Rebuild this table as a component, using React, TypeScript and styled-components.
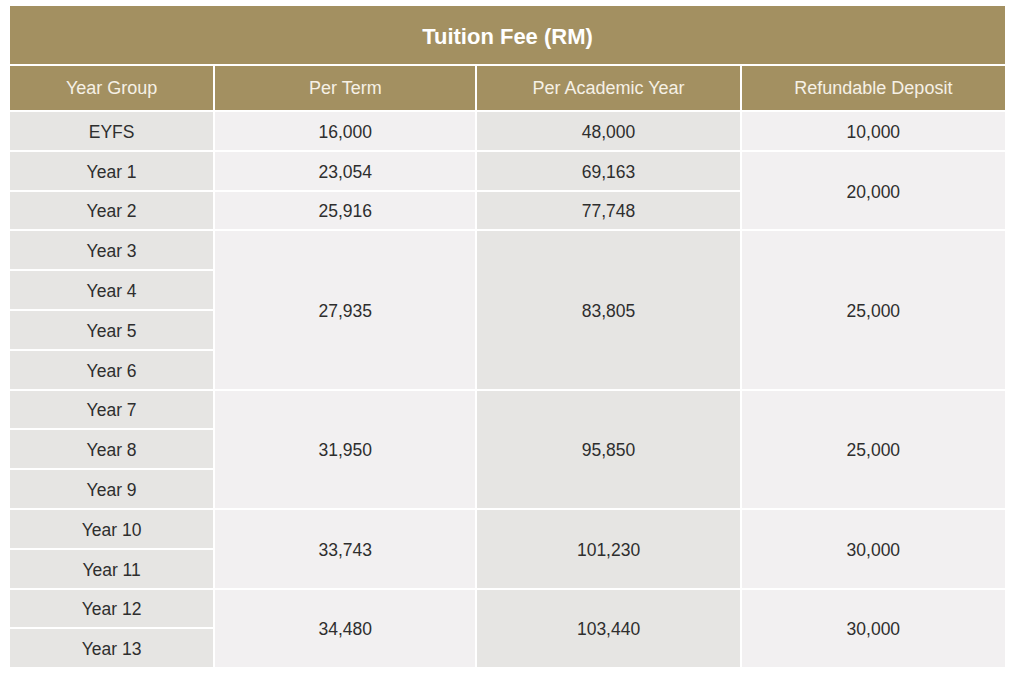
import styled, { createGlobalStyle } from "styled-components";

const GlobalStyle = createGlobalStyle`
  body {
    margin: 4px 8px;
    background: #ffffff;
    font-family: "Liberation Sans", Arial, sans-serif;
  }
`;

type Cell = { value: string; span: number };

type Group = {
  years: string[];
  perTerm?: Cell[];
  perYear?: Cell[];
  deposit: Cell[];
};

// each group lists its year rows; fee cells carry their own row span
const groups: Group[] = [
  {
    years: ["EYFS"],
    perTerm: [{ value: "16,000", span: 1 }],
    perYear: [{ value: "48,000", span: 1 }],
    deposit: [{ value: "10,000", span: 1 }]
  },
  {
    years: ["Year 1", "Year 2"],
    perTerm: [
      { value: "23,054", span: 1 },
      { value: "25,916", span: 1 }
    ],
    perYear: [
      { value: "69,163", span: 1 },
      { value: "77,748", span: 1 }
    ],
    deposit: [{ value: "20,000", span: 2 }]
  },
  {
    years: ["Year 3", "Year 4", "Year 5", "Year 6"],
    perTerm: [{ value: "27,935", span: 4 }],
    perYear: [{ value: "83,805", span: 4 }],
    deposit: [{ value: "25,000", span: 4 }]
  },
  {
    years: ["Year 7", "Year 8", "Year 9"],
    perTerm: [{ value: "31,950", span: 3 }],
    perYear: [{ value: "95,850", span: 3 }],
    deposit: [{ value: "25,000", span: 3 }]
  },
  {
    years: ["Year 10", "Year 11"],
    perTerm: [{ value: "33,743", span: 2 }],
    perYear: [{ value: "101,230", span: 2 }],
    deposit: [{ value: "30,000", span: 2 }]
  },
  {
    years: ["Year 12", "Year 13"],
    perTerm: [{ value: "34,480", span: 2 }],
    perYear: [{ value: "103,440", span: 2 }],
    deposit: [{ value: "30,000", span: 2 }]
  }
];

// a cell starts on row i when the spans before it add up to i
const cellAt = (cells: Cell[] | undefined, row: number) => {
  if (!cells) return null;
  let start = 0;
  for (const cell of cells) {
    if (start === row) return cell;
    start += cell.span;
  }
  return null;
};

const App: React.FC = () => {
  return (
    <>
      <GlobalStyle />
      <FeeTable>
        <colgroup>
          <col style={{ width: 203 }} />
          <col style={{ width: 260 }} />
          <col style={{ width: 262 }} />
          <col style={{ width: 263 }} />
        </colgroup>
        <thead>
          <tr>
            <TitleCell colSpan={4}>Tuition Fee (RM)</TitleCell>
          </tr>
          <tr>
            <HeadCell>Year Group</HeadCell>
            <HeadCell>Per Term</HeadCell>
            <HeadCell>Per Academic Year</HeadCell>
            <HeadCell>Refundable Deposit</HeadCell>
          </tr>
        </thead>
        <tbody>
          {groups.map((group) =>
            group.years.map((year, i) => {
              const term = cellAt(group.perTerm, i);
              const academic = cellAt(group.perYear, i);
              const deposit = cellAt(group.deposit, i);
              return (
                <Row key={year}>
                  <DataCell $shade="dark">{year}</DataCell>
                  {term && (
                    <DataCell $shade="light" rowSpan={term.span}>
                      {term.value}
                    </DataCell>
                  )}
                  {academic && (
                    <DataCell $shade="dark" rowSpan={academic.span}>
                      {academic.value}
                    </DataCell>
                  )}
                  {deposit && (
                    <DataCell $shade="light" rowSpan={deposit.span}>
                      {deposit.value}
                    </DataCell>
                  )}
                </Row>
              );
            })
          )}
        </tbody>
      </FeeTable>
    </>
  );
};

const FeeTable = styled.table`
  width: 999px;
  table-layout: fixed;
  border-collapse: separate;
  border-spacing: 2px;
  background: #ffffff;
`;

const TitleCell = styled.th`
  height: 58px;
  padding: 3px 0 0;
  box-sizing: border-box;
  background: #a39061;
  color: #ffffff;
  font-size: 22px;
  font-weight: bold;
  text-align: center;
  vertical-align: middle;
`;

const HeadCell = styled.th`
  height: 44px;
  padding: 0;
  background: #a39061;
  color: #f6f1e6;
  font-size: 18px;
  font-weight: normal;
  text-align: center;
  vertical-align: middle;
`;

const Row = styled.tr`
  height: 37.8px;
`;

const DataCell = styled.td<{ $shade: "dark" | "light" }>`
  padding: 3px 0 0;
  background: ${(p) => (p.$shade === "dark" ? "#e6e5e3" : "#f2f0f1")};
  color: #2e2e2e;
  font-size: 17.5px;
  text-align: center;
  vertical-align: middle;
`;

export default App;
